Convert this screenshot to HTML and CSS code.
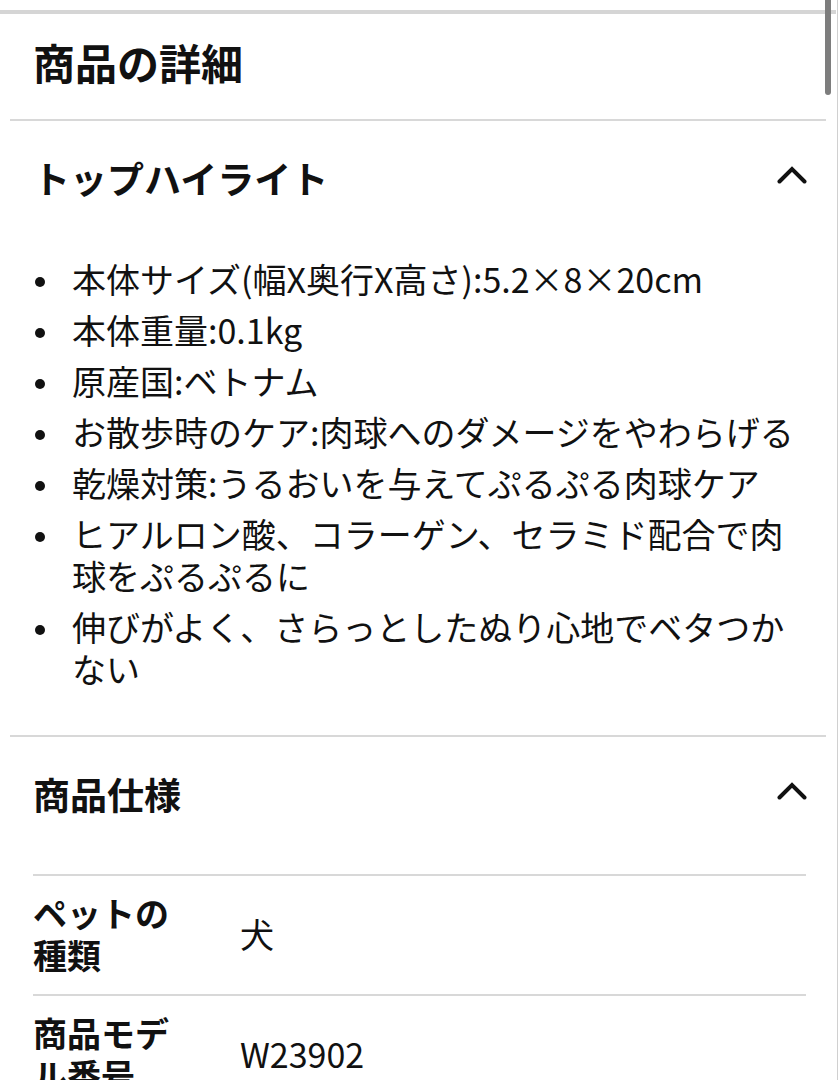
FILE: index.html
```html
<!DOCTYPE html>
<html lang="ja">
<head>
<meta charset="utf-8">
<title>商品の詳細</title>
<link rel="stylesheet" href="styles.css">
</head>
<body>
<div class="topbar"></div>
<div class="page">
  <h1 class="title">商品の詳細</h1>

  <section class="section">
    <div class="section-head">
      <h2 class="section-title">トップハイライト</h2>
      <svg class="chevron" viewBox="0 0 30 20" width="30" height="20" aria-hidden="true"><polyline points="2.5,16.5 15,4 27.5,16.5" fill="none" stroke="#111" stroke-width="4" stroke-linecap="round" stroke-linejoin="miter"/></svg>
    </div>
    <ul class="highlights">
      <li>本体サイズ(幅X奥行X高さ):5.2×8×20cm</li>
      <li>本体重量:0.1kg</li>
      <li>原産国:ベトナム</li>
      <li>お散歩時のケア:肉球へのダメージをやわらげる</li>
      <li>乾燥対策:うるおいを与えてぷるぷる肉球ケア</li>
      <li>ヒアルロン酸、コラーゲン、セラミド配合で肉球をぷるぷるに</li>
      <li>伸びがよく、さらっとしたぬり心地でベタつかない</li>
    </ul>
  </section>

  <section class="section">
    <div class="section-head">
      <h2 class="section-title">商品仕様</h2>
      <svg class="chevron" viewBox="0 0 30 20" width="30" height="20" aria-hidden="true"><polyline points="2.5,16.5 15,4 27.5,16.5" fill="none" stroke="#111" stroke-width="4" stroke-linecap="round" stroke-linejoin="miter"/></svg>
    </div>
    <div class="specs">
      <div class="spec-row">
        <div class="spec-label">ペットの種類</div>
        <div class="spec-value">犬</div>
      </div>
      <div class="spec-row">
        <div class="spec-label">商品モデル番号</div>
        <div class="spec-value">W23902</div>
      </div>
    </div>
  </section>
</div>
<div class="scroll-track"></div>
<div class="scroll-thumb"></div>
</body>
</html>
```

FILE: styles.css
```css
html, body {
  margin: 0;
  padding: 0;
  background: #fff;
}
body {
  font-family: "Noto Sans CJK JP", "Noto Sans", sans-serif;
  color: #111;
  overflow: hidden;
  height: 1080px;
}
.topbar {
  margin-top: 10px;
  width: 836px;
  height: 4px;
  background: #d5d5d5;
}
.page {
  margin: 0 12px 0 10px;
}
.title {
  margin: 0;
  padding: 27px 0 36px 23px;
  font-size: 42px;
  line-height: 42px;
  font-weight: 700;
}
.section {
  border-top: 2px solid #d8d8d8;
}
.section-head {
  display: flex;
  align-items: center;
  justify-content: space-between;
  padding: 39px 20px 0 23px;
}
.section-title {
  margin: 0;
  font-size: 37px;
  line-height: 37px;
  font-weight: 700;
}
.chevron {
  display: block;
  margin-top: -8px;
  margin-right: -1px;
}
.highlights {
  list-style: none;
  margin: 0;
  padding: 61px 20px 45px 25px;
}
.highlights li {
  display: flex;
  font-size: 34px;
  line-height: 42px;
  margin-bottom: 9px;
}
.highlights li:last-child {
  margin-bottom: 0;
}
.highlights li::before {
  content: "";
  flex: none;
  width: 10px;
  height: 10px;
  border-radius: 50%;
  background: #111;
  margin-top: 19px;
  margin-right: 27px;
}
.specs {
  padding: 61px 20px 0 23px;
}
.spec-row {
  display: flex;
  align-items: center;
  border-top: 2px solid #d8d8d8;
  padding: 16px 0 18px;
}
.spec-label {
  flex: none;
  width: 140px;
  margin-right: 67px;
  font-size: 34px;
  line-height: 42px;
  font-weight: 700;
}
.spec-value {
  font-size: 34px;
  line-height: 42px;
}
.scroll-track {
  position: absolute;
  top: 0;
  right: 0;
  width: 1px;
  height: 1080px;
  background: #d0d0d0;
}
.scroll-thumb {
  position: absolute;
  top: 0;
  left: 825px;
  width: 6px;
  height: 95px;
  border-radius: 0 0 3px 3px;
  background: #7d7d7d;
}
```
